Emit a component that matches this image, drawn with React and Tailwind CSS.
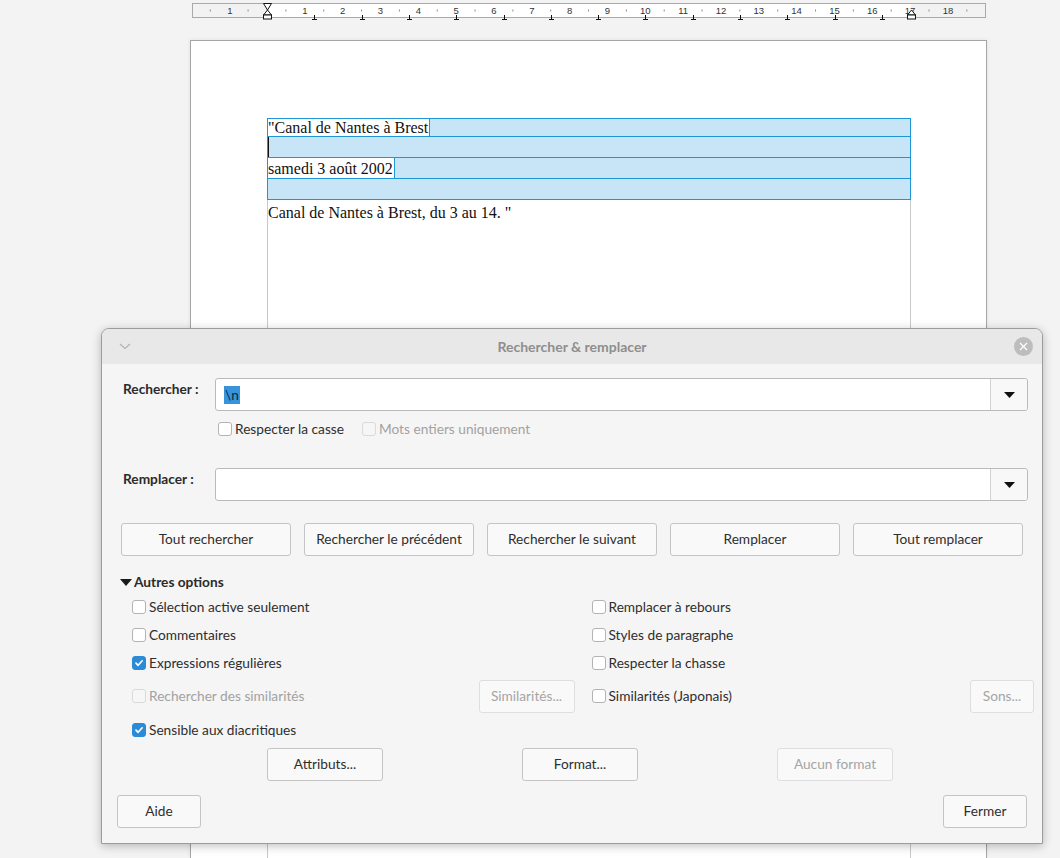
import React from "react";
import clsx from "clsx";

const CM = 37.83;

const Ruler = () => {
  const nums = [];
  for (let n = 1; n <= 18; n++) nums.push(n);
  const halfTicks = [];
  for (let n = 0; n < 19; n++) halfTicks.push(75 + CM * (n + 0.5));
  const tabs = [];
  for (let n = 1; n <= 13; n++) tabs.push(75 + 47.3 * n);

  return (
    <svg width="796" height="17" viewBox="0 0 796 17" className="block">
      <rect x="0.5" y="0.5" width="793" height="14" fill="#f2f2f2" stroke="#a9a9a9" />
      <rect x="75" y="1" width="644" height="13" fill="#ffffff" />
      {/* left margin */}
      <line x1="18.3" y1="6.5" x2="18.3" y2="8.5" stroke="#8a8a8a" />
      <line x1="56.1" y1="6.5" x2="56.1" y2="8.5" stroke="#8a8a8a" />
      <text x="38" y="11" fontSize="9.5" fill="#333" textAnchor="middle" fontFamily="Liberation Sans, sans-serif">1</text>
      {halfTicks.map((x, i) =>
        x < 790 ? <line key={i} x1={x} y1="6.5" x2={x} y2="8.5" stroke="#8a8a8a" /> : null
      )}
      {nums.map((n) => (
        <text
          key={n}
          x={75 + CM * n}
          y="11"
          fontSize="9.5"
          fill="#333"
          textAnchor="middle"
          fontFamily="Liberation Sans, sans-serif"
        >
          {n}
        </text>
      ))}
      {tabs.map((x, i) => (
        <g key={i} stroke="#111" strokeWidth="1">
          <line x1={Math.round(x) + 0.5} y1="12" x2={Math.round(x) + 0.5} y2="16.5" />
          <line x1={Math.round(x) - 2} y1="16.5" x2={Math.round(x) + 3} y2="16.5" />
        </g>
      ))}
      {/* left indent hourglass */}
      <g stroke="#111" fill="#fff" strokeWidth="1">
        <path d="M71.5 0.5 L79.5 0.5 L75.5 7 Z" />
        <path d="M75.5 7 L71.5 12 L79.5 12 Z" />
        <rect x="71.5" y="12" width="8" height="4" />
      </g>
      {/* right indent */}
      <g stroke="#111" fill="#fff" strokeWidth="1">
        <path d="M719.5 7 L715.5 12 L723.5 12 Z" />
        <rect x="715.5" y="12" width="8" height="4" />
      </g>
    </svg>
  );
};

const Check = ({ checked, disabled }) => (
  <span
    className={clsx(
      "flex h-[14px] w-[14px] shrink-0 items-center justify-center rounded-[3px] border",
      checked
        ? "border-[#2b8bd6] bg-[#2b8bd6]"
        : disabled
        ? "border-[#dadada] bg-[#f6f6f6]"
        : "border-[#b3b3b3] bg-white"
    )}
  >
    {checked && (
      <svg width="10" height="10" viewBox="0 0 10 10">
        <path d="M2 5.2 L4.1 7.3 L8.2 2.8" fill="none" stroke="#fff" strokeWidth="1.7" strokeLinecap="round" strokeLinejoin="round" />
      </svg>
    )}
  </span>
);

const Option = ({ label, checked, disabled }) => (
  <div className="flex items-center gap-[3px]">
    <Check checked={checked} disabled={disabled} />
    <span className={disabled ? "text-[#a2a2a2]" : "text-[#2e2e2e]"}>{label}</span>
  </div>
);

const Btn = ({ children, disabled, className }) => (
  <button
    className={clsx(
      "flex h-[33px] items-center justify-center rounded-[3px] border bg-[#f9f9f9]",
      disabled ? "border-[#dedede] text-[#a5a5a5]" : "border-[#c4c4c4] text-[#2e2e2e]",
      className
    )}
  >
    {children}
  </button>
);

const Combo = ({ children }) => (
  <div className="flex h-[33px] flex-1 rounded-[3px] border border-[#bababa] bg-white">
    <div className="flex flex-1 items-center pl-[8px]">{children}</div>
    <div className="flex w-[37px] items-center justify-center rounded-r-[3px] border-l border-[#d2d2d2] bg-[#f8f8f8]">
      <svg width="11" height="6" viewBox="0 0 11 6">
        <path d="M0 0 L11 0 L5.5 6 Z" fill="#111" />
      </svg>
    </div>
  </div>
);

const Dialog = () => (
  <div className="absolute left-[101px] top-[328px] flex h-[516px] w-[942px] flex-col overflow-hidden rounded-t-[8px] border border-[#9c9c9c] bg-[#f5f5f5] font-['Lato','Noto_Sans',sans-serif] text-[13.7px] shadow-[0_2px_10px_rgba(0,0,0,0.25)]">
    {/* title bar */}
    <div className="relative flex h-[35px] shrink-0 items-center justify-center bg-[#e8e8e8]">
      <svg className="absolute left-[17px] top-[14px]" width="12" height="7" viewBox="0 0 12 7">
        <path d="M1 1 L6 5.5 L11 1" fill="none" stroke="#b3b3b3" strokeWidth="1.2" />
      </svg>
      <span className="text-[14px] font-bold text-[#8e8e8e]">Rechercher &amp; remplacer</span>
      <div className="absolute right-[9px] top-[8px] flex h-[19px] w-[19px] items-center justify-center rounded-full bg-[#bdbdbd]">
        <svg width="9" height="9" viewBox="0 0 9 9">
          <path d="M1 1 L8 8 M8 1 L1 8" stroke="#fff" strokeWidth="1.2" />
        </svg>
      </div>
    </div>

    {/* body */}
    <div className="flex flex-1 flex-col">
      <div className="mt-[14px] flex pr-[14px]">
        <div className="w-[113px] pl-[21px] pt-[1px] font-bold text-[#2b2b2b]">Rechercher :</div>
        <Combo>
          <span className="bg-[#3793da] px-[1px] leading-[18px] text-[#0d2740]">\n</span>
        </Combo>
      </div>

      <div className="mt-[11px] flex h-[14px] items-center gap-[18px] pl-[116px]">
        <Option label="Respecter la casse" />
        <Option label="Mots entiers uniquement" disabled />
      </div>

      <div className="mt-[32px] flex pr-[14px]">
        <div className="w-[113px] pl-[21px] pt-[1px] font-bold text-[#2b2b2b]">Remplacer :</div>
        <Combo />
      </div>

      <div className="mt-[22px] flex gap-[13px] px-[19px]">
        <Btn className="w-[171px]">Tout rechercher</Btn>
        <Btn className="w-[171px]">Rechercher le précédent</Btn>
        <Btn className="w-[171px]">Rechercher le suivant</Btn>
        <Btn className="w-[171px]">Remplacer</Btn>
        <Btn className="w-[171px]">Tout remplacer</Btn>
      </div>

      <div className="mt-[16px] flex h-[20px] items-center gap-[2px] pl-[18px] font-bold text-[#2b2b2b]">
        <svg width="12" height="7" viewBox="0 0 12 7">
          <path d="M0 0 L12 0 L6 7 Z" fill="#1a1a1a" />
        </svg>
        <span>Autres options</span>
      </div>

      <div className="mt-[1px] grid grid-cols-2 gap-x-[17px] pl-[30px] pr-[8px]">
        <div className="flex h-[28px] items-center"><Option label="Sélection active seulement" /></div>
        <div className="flex h-[28px] items-center"><Option label="Remplacer à rebours" /></div>
        <div className="flex h-[28px] items-center"><Option label="Commentaires" /></div>
        <div className="flex h-[28px] items-center"><Option label="Styles de paragraphe" /></div>
        <div className="flex h-[28px] items-center"><Option label="Expressions régulières" checked /></div>
        <div className="flex h-[28px] items-center"><Option label="Respecter la chasse" /></div>
        <div className="mt-[3px] flex h-[33px] items-center justify-between">
          <Option label="Rechercher des similarités" disabled />
          <Btn disabled className="w-[96px]">Similarités...</Btn>
        </div>
        <div className="mt-[3px] flex h-[33px] items-center justify-between">
          <Option label="Similarités (Japonais)" />
          <Btn disabled className="w-[64px]">Sons...</Btn>
        </div>
        <div className="mt-[3px] flex h-[28px] items-center"><Option label="Sensible aux diacritiques" checked /></div>
        <div />
      </div>

      <div className="mt-[4px] flex gap-[139px] pl-[165px]">
        <Btn className="w-[116px]">Attributs...</Btn>
        <Btn className="w-[116px]">Format...</Btn>
        <Btn disabled className="w-[116px]">Aucun format</Btn>
      </div>

      <div className="mt-[14px] flex justify-between px-[15px]">
        <Btn className="w-[84px]">Aide</Btn>
        <Btn className="w-[84px]">Fermer</Btn>
      </div>
    </div>
  </div>
);

const Row = ({ text, cursor, h }) => (
  <div className={clsx("flex border-b border-[#1f96d6] last:border-b-0", h)}>
    {text && (
      <span className="flex items-center border-r border-[#1f96d6] bg-white pr-[1px]">{text}</span>
    )}
    <div className="relative flex-1 bg-[#c7e5f7]">
      {cursor && <div className="absolute left-0 top-0 h-full w-[1px] bg-[#111]" />}
    </div>
  </div>
);

export default function App() {
  return (
    <div className="relative flex h-[858px] w-[1060px] flex-col overflow-hidden bg-[#f3f3f3]">
      <div className="pl-[192px] pt-[3px]">
        <Ruler />
      </div>

      <div className="ml-[190px] mt-[20px] w-[797px] flex-1 border-x border-t border-[#a6a6a6] bg-white shadow-[0_0_4px_rgba(0,0,0,0.08)]">
        <div className="ml-[76px] mt-[77px] h-full w-[644px] border-x border-[#c9c9c9] font-['Liberation_Serif',serif] text-[16px] leading-[17px] text-[#111]">
          <div className="-mx-[1px] border border-[#1f96d6]">
            <Row text={'"Canal de Nantes à Brest'} h="h-[18px]" />
            <Row cursor h="h-[21px]" />
            <Row text="samedi 3 août 2002" h="h-[21px]" />
            <Row h="h-[20px]" />
          </div>
          <div className="pt-[2px] leading-[21px]">Canal de Nantes à Brest, du 3 au 14. "</div>
        </div>
      </div>

      <Dialog />
    </div>
  );
}
